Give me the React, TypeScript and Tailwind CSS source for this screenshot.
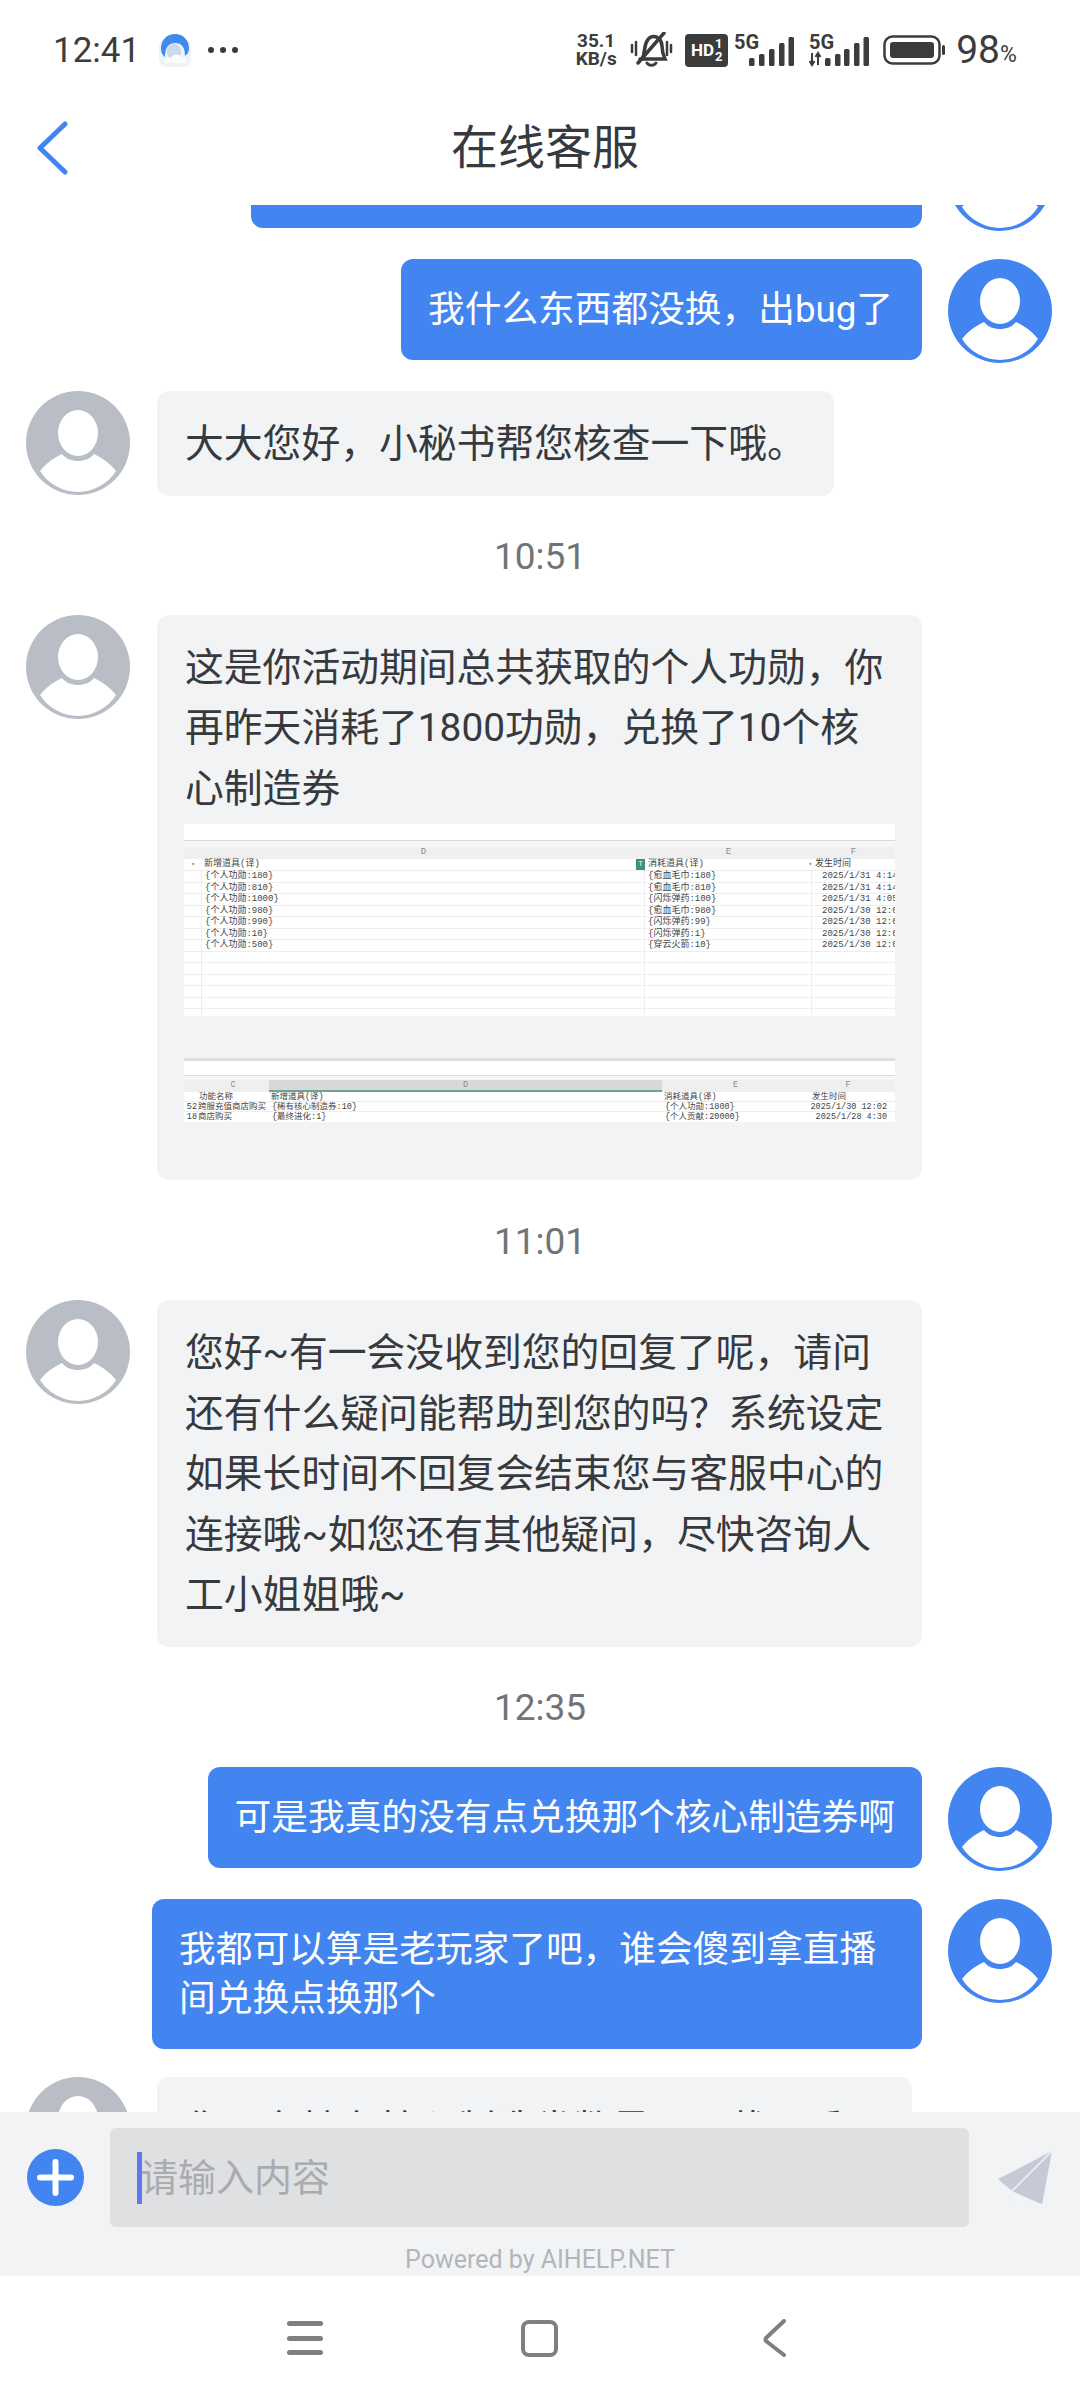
import React from "react";

const CJK = { fontFamily: 'Roboto, "Noto Sans CJK SC", sans-serif' } as const;
const MONO = { fontFamily: '"Liberation Mono", "Noto Sans CJK SC", monospace' } as const;

function Avatar({ color }: { color: string }) {
  return (
    <svg width="104" height="104" viewBox="0 0 104 104" className="shrink-0">
      <circle cx="52" cy="52" r="52" fill={color} />
      <ellipse cx="52" cy="42" rx="20" ry="23" fill="#fff" />
      <path d="M14 80 C20 72 28 67 36 63 C40 68 46 70 52 70 C58 70 64 68 68 63 C76 67 84 72 90 80 A45 45 0 0 1 14 80 Z" fill="#fff" />
    </svg>
  );
}

function Left({ children, className = "" }: { children: React.ReactNode; className?: string }) {
  return (
    <div className="flex items-start gap-[27px] pl-[26px]">
      <Avatar color="#b9bdc5" />
      <div className={`rounded-[12px] bg-[#f1f3f5] px-[28px] pb-[21px] pt-[23px] text-[38.8px] leading-[60.5px] text-[#36393d] ${className}`}>
        {children}
      </div>
    </div>
  );
}

function Right({ children, className = "" }: { children: React.ReactNode; className?: string }) {
  return (
    <div className="flex items-start justify-end gap-[26px] pr-[28px]">
      <div className={`max-w-[770px] rounded-[12px] bg-[#4285f0] px-[27px] py-[26px] text-[36.7px] leading-[49px] text-white ${className}`}>
        {children}
      </div>
      <Avatar color="#4285f0" />
    </div>
  );
}

function Time({ children, className = "h-16" }: { children: React.ReactNode; className?: string }) {
  return <div className={`flex items-center justify-center pt-[3px] text-[37px] text-[#717377] ${className}`}>{children}</div>;
}

const rows1 = [
  ["{个人功勋:180}", "{愈血毛巾:180}", "2025/1/31 4:14"],
  ["{个人功勋:810}", "{愈血毛巾:810}", "2025/1/31 4:14"],
  ["{个人功勋:1000}", "{闪烁弹药:100}", "2025/1/31 4:05"],
  ["{个人功勋:980}", "{愈血毛巾:980}", "2025/1/30 12:02"],
  ["{个人功勋:990}", "{闪烁弹药:99}", "2025/1/30 12:02"],
  ["{个人功勋:10}", "{闪烁弹药:1}", "2025/1/30 12:02"],
  ["{个人功勋:500}", "{穿云火箭:10}", "2025/1/30 12:02"],
  ["", "", ""],
  ["", "", ""],
  ["", "", ""],
  ["", "", ""],
  ["", "", ""],
  ["", "", ""],
];

function SheetOne() {
  return (
    <div className="flex h-[192px] flex-col overflow-hidden bg-white text-[9px] leading-[11px] text-[#444]" style={MONO}>
      <div className="h-[17px] shrink-0 border-b border-[#d9d9d9]" />
      <div className="h-[6px] shrink-0 bg-[#f6f6f6]" />
      <div className="grid h-[12px] shrink-0 grid-cols-[18px_443px_167px_83px] bg-[#efeff0] text-center text-[#8a8a8a]">
        <span />
        <span>D</span>
        <span>E</span>
        <span>F</span>
      </div>
      <div className="grid h-[12px] shrink-0 grid-cols-[18px_443px_167px_83px] border-b border-[#ececec]">
        <span className="text-center text-[6px] text-[#777]">▾</span>
        <span className="flex justify-between pl-[2px]">
          <span>新增道具(译)</span>
          <span className="w-[9px] bg-[#3f9279] text-center text-[7px] text-white">T</span>
        </span>
        <span className="flex justify-between pl-[3px]">
          <span>消耗道具(译)</span>
          <span className="text-[6px] text-[#777]">▾</span>
        </span>
        <span className="pl-[3px]">发生时间</span>
      </div>
      {rows1.map((r, i) => (
        <div key={i} className="grid h-[11.5px] shrink-0 grid-cols-[18px_443px_167px_83px] border-b border-[#eeeeee]">
          <span className="border-r border-[#eeeeee]" />
          <span className="whitespace-nowrap border-r border-[#eeeeee] pl-[3px]">{r[0]}</span>
          <span className="whitespace-nowrap border-r border-[#eeeeee] pl-[3px]">{r[1]}</span>
          <span className="overflow-hidden whitespace-nowrap pl-[10px]">{r[2]}</span>
        </div>
      ))}
    </div>
  );
}

function SheetTwo() {
  const cols = "grid-cols-[13px_72px_393px_147px_78px_8px]";
  return (
    <div className="mt-[42px] flex h-[64px] flex-col overflow-hidden bg-white text-[8.5px] leading-[10px] text-[#444]" style={MONO}>
      <div className="h-[3px] shrink-0 bg-[#dfdfdf]" />
      <div className="h-[15px] shrink-0 border-b border-[#dcdcdc]" />
      <div className="h-[4px] shrink-0 bg-[#f6f6f6]" />
      <div className={`grid h-[12px] shrink-0 ${cols} bg-[#efeff0] text-center text-[#8a8a8a]`}>
        <span />
        <span>C</span>
        <span className="border-b-2 border-[#6ba58c] bg-[#d8d8da]">D</span>
        <span>E</span>
        <span>F</span>
        <span />
      </div>
      <div className={`grid h-[10px] shrink-0 ${cols} border-b border-[#ececec]`}>
        <span />
        <span className="pl-[2px]">功能名称</span>
        <span className="pl-[2px]">新增道具(译)</span>
        <span className="pl-[2px]">消耗道具(译)</span>
        <span className="pl-[3px]">发生时间</span>
        <span />
      </div>
      <div className={`grid h-[10px] shrink-0 ${cols} border-b border-[#eeeeee]`}>
        <span className="overflow-hidden text-right">52</span>
        <span className="overflow-hidden whitespace-nowrap pl-[1px]">跨服充值商店购买</span>
        <span className="pl-[3px]">{"{稀有核心制造券:10}"}</span>
        <span className="pl-[3px]">{"{个人功勋:1800}"}</span>
        <span className="whitespace-nowrap text-right">2025/1/30 12:02</span>
        <span />
      </div>
      <div className={`grid h-[10px] shrink-0 ${cols}`}>
        <span className="overflow-hidden text-right">18</span>
        <span className="pl-[1px]">商店购买</span>
        <span className="pl-[3px]">{"{最终进化:1}"}</span>
        <span className="pl-[3px]">{"{个人贡献:20000}"}</span>
        <span className="whitespace-nowrap text-right">2025/1/28 4:30</span>
        <span />
      </div>
    </div>
  );
}

function Bars({ xs }: { xs: number[] }) {
  const tops = [57, 53, 48, 42, 36];
  return (
    <>
      {xs.map((x, i) => (
        <rect key={i} x={x} y={tops[i] - 33} width="5.5" height={65 - tops[i]} rx="1.5" fill="#3c3c3c" />
      ))}
    </>
  );
}

function StatusBar() {
  return (
    <div className="flex h-[100px] items-center pl-[53px] pr-[58px] text-[#3c3c3c]" style={{ fontFamily: 'Roboto, "Noto Sans", sans-serif' }}>
      <span className="text-[35px] leading-none">12:41</span>
      <svg width="32" height="34" viewBox="0 0 32 34" className="ml-[19px]">
        <rect x="0" y="6" width="32" height="28" rx="8" fill="#eef2f9" />
        <path d="M16 1 C7 1 2 8 2 15 C2 19 3 22 6 24 C6 19 7 10 16 10 C24 10 26 16 26 23 C29 21 30 18 30 15 C30 8 25 1 16 1 Z" fill="#3d8bec" />
        <ellipse cx="15" cy="19" rx="7" ry="8" fill="#c9d9ee" />
        <path d="M6 30 C4 26 9 23 12 25 C14 20 22 21 22 25 C26 24 28 28 26 30 Z" fill="#fbfcfe" />
      </svg>
      <span className="ml-[17px] flex gap-[6px]">
        <span className="h-[6px] w-[6px] rounded-full bg-[#3c3c3c]" />
        <span className="h-[6px] w-[6px] rounded-full bg-[#3c3c3c]" />
        <span className="h-[6px] w-[6px] rounded-full bg-[#3c3c3c]" />
      </span>
      <div className="ml-auto flex items-center">
        <div className="flex w-[46px] flex-col whitespace-nowrap text-center text-[19px] font-bold leading-[18px]">
          <span>35.1</span>
          <span>KB/s</span>
        </div>
        <svg width="43" height="36" viewBox="0 0 43 36" className="ml-[11px]" fill="none" stroke="#3c3c3c" strokeLinecap="round">
          <path d="M13 25 C15 20 14 8 21 5 C27 3 32 8 32 14 C32 20 33 23 35 27 L10 27" strokeWidth="3.5" />
          <path d="M17 31 C19 34 24 34 26 31" strokeWidth="3" />
          <path d="M34 1 L8 31" strokeWidth="3.5" />
          <path d="M2 13 V20 M6 10 V23 M37 10 V23 M41 13 V20" strokeWidth="2.5" />
        </svg>
        <div className="ml-[12px] flex h-[33px] w-[43px] items-center justify-center gap-[1px] rounded-[4px] bg-[#3c3c3c] text-white">
          <span className="text-[17px] font-bold leading-none">HD</span>
          <span className="flex flex-col text-[13px] font-bold leading-[13px]">
            <span>1</span>
            <span>2</span>
          </span>
        </div>
        <svg width="60" height="33" viewBox="0 0 60 33" className="ml-[6px]">
          <text x="0" y="15" fontSize="20" fontWeight="700" fill="#3c3c3c" fontFamily="Roboto">5G</text>
          <Bars xs={[15, 25, 35, 45, 54.5]} />
        </svg>
        <svg width="60" height="33" viewBox="0 0 60 33" className="ml-[15px]">
          <text x="0" y="15" fontSize="20" fontWeight="700" fill="#3c3c3c" fontFamily="Roboto">5G</text>
          <path d="M3 19 V31 M0.5 27 L3 31 L5.5 27 M9 31 V19 M6.5 23 L9 19 L11.5 23" stroke="#3c3c3c" strokeWidth="2" fill="none" />
          <Bars xs={[16, 26, 35, 45, 54.5]} />
        </svg>
        <svg width="62" height="30" viewBox="0 0 62 30" className="ml-[14px]">
          <rect x="1.5" y="1.5" width="55" height="27" rx="8" fill="none" stroke="#3c3c3c" strokeWidth="2.5" />
          <rect x="7" y="7" width="44" height="16" rx="3" fill="#3c3c3c" />
          <rect x="59" y="10" width="3" height="10" rx="1.5" fill="#3c3c3c" />
        </svg>
        <span className="ml-[11px] text-[39px] leading-none">98</span>
        <span className="mt-[8px] w-[22px] text-[23px] leading-none">%</span>
      </div>
    </div>
  );
}

export default function App() {
  return (
    <div className="flex h-[2400px] w-[1080px] flex-col overflow-hidden bg-white" style={CJK}>
      <StatusBar />
      <div className="flex h-[105px] shrink-0 items-center pb-[10px] pl-[36px]">
        <svg width="32" height="54" viewBox="0 0 32 54" fill="none" className="shrink-0">
          <path d="M29 3 L4 27 L29 51" stroke="#4285f0" strokeWidth="5" strokeLinecap="round" strokeLinejoin="round" />
        </svg>
        <div className="flex-1 pr-[58px] text-center text-[47px] leading-none text-[#36393d]">在线客服</div>
      </div>

      <div className="min-h-0 flex-1 overflow-hidden">
        <div className="mt-[-78px] flex flex-col gap-[28px]">
          <div className="flex items-start justify-end gap-[26px] pr-[28px]">
            <div className="h-[101px] w-[671px] rounded-[12px] bg-[#4285f0]" />
            <Avatar color="#4285f0" />
          </div>
          <Right className="w-[521px]">我什么东西都没换，出bug了</Right>
          <Left className="w-[677px]">大大您好，小秘书帮您核查一下哦。</Left>
          <Time className="h-[63px]">10:51</Time>
          <Left className="w-[765px]">
            这是你活动期间总共获取的个人功勋，你再昨天消耗了1800功勋，兑换了10个核心制造券
            <div className="mb-[37px] mt-[5px] -mr-[1px] -ml-[1px]">
              <SheetOne />
              <SheetTwo />
            </div>
          </Left>
          <Time>11:01</Time>
          <Left className="w-[765px]">
            您好~有一会没收到您的回复了呢，请问还有什么疑问能帮助到您的吗？系统设定如果长时间不回复会结束您与客服中心的连接哦~如您还有其他疑问，尽快咨询人工小姐姐哦~
          </Left>
          <Time>12:35</Time>
          <Right>可是我真的没有点兑换那个核心制造券啊</Right>
          <Right>我都可以算是老玩家了吧，谁会傻到拿直播间兑换点换那个</Right>
          <Left className="w-[755px]">你现在持有核心制造券数量可以截图看一下</Left>
        </div>
      </div>

      <div className="h-[164px] shrink-0 bg-[#f2f3f5] pt-[16px]">
        <div className="flex items-center pl-[27px]">
          <svg width="57" height="57" viewBox="0 0 57 57" className="shrink-0">
            <circle cx="28.5" cy="28.5" r="28.5" fill="#4285f0" />
            <path d="M28.5 13 V44 M13 28.5 H44" stroke="#fff" strokeWidth="6" strokeLinecap="round" />
          </svg>
          <div className="ml-[26px] flex h-[99px] w-[859px] items-center rounded-[6px] bg-[#dfe0e2] pl-[27px]">
            <span className="h-[52px] w-[5px] bg-[#5f78f2]" />
            <span className="ml-[-2px] text-[38px] leading-none text-[#a9abaf]">请输入内容</span>
          </div>
          <svg width="54" height="54" viewBox="0 0 54 54" className="ml-[29px] shrink-0">
            <path d="M54 0 L0 28 L14 40 L44 54 Z" fill="#c5cad6" />
            <path d="M54 0 L14 40 L18 52 L20 44 L44 54" fill="none" stroke="#f2f3f5" strokeWidth="1.5" />
          </svg>
        </div>
        <div className="mt-[18px] text-center text-[25px] leading-[30px] text-[#b3b5b9]">Powered by AIHELP.NET</div>
      </div>

      <div className="flex h-[124px] shrink-0 items-center pl-[287px]">
        <div className="flex h-[34px] w-[36px] flex-col justify-between">
          <span className="h-[5px] rounded-full bg-[#7f7f7f]" />
          <span className="h-[5px] rounded-full bg-[#7f7f7f]" />
          <span className="h-[5px] rounded-full bg-[#7f7f7f]" />
        </div>
        <div className="ml-[198px] h-[37px] w-[37px] rounded-[8px] border-[4px] border-[#7f7f7f]" />
        <svg width="24" height="38" viewBox="0 0 24 38" fill="none" className="ml-[204px]">
          <path d="M22 2 L4 19 Q3 20 4 22 L22 36" stroke="#7f7f7f" strokeWidth="4" strokeLinecap="round" strokeLinejoin="round" />
        </svg>
      </div>
    </div>
  );
}
